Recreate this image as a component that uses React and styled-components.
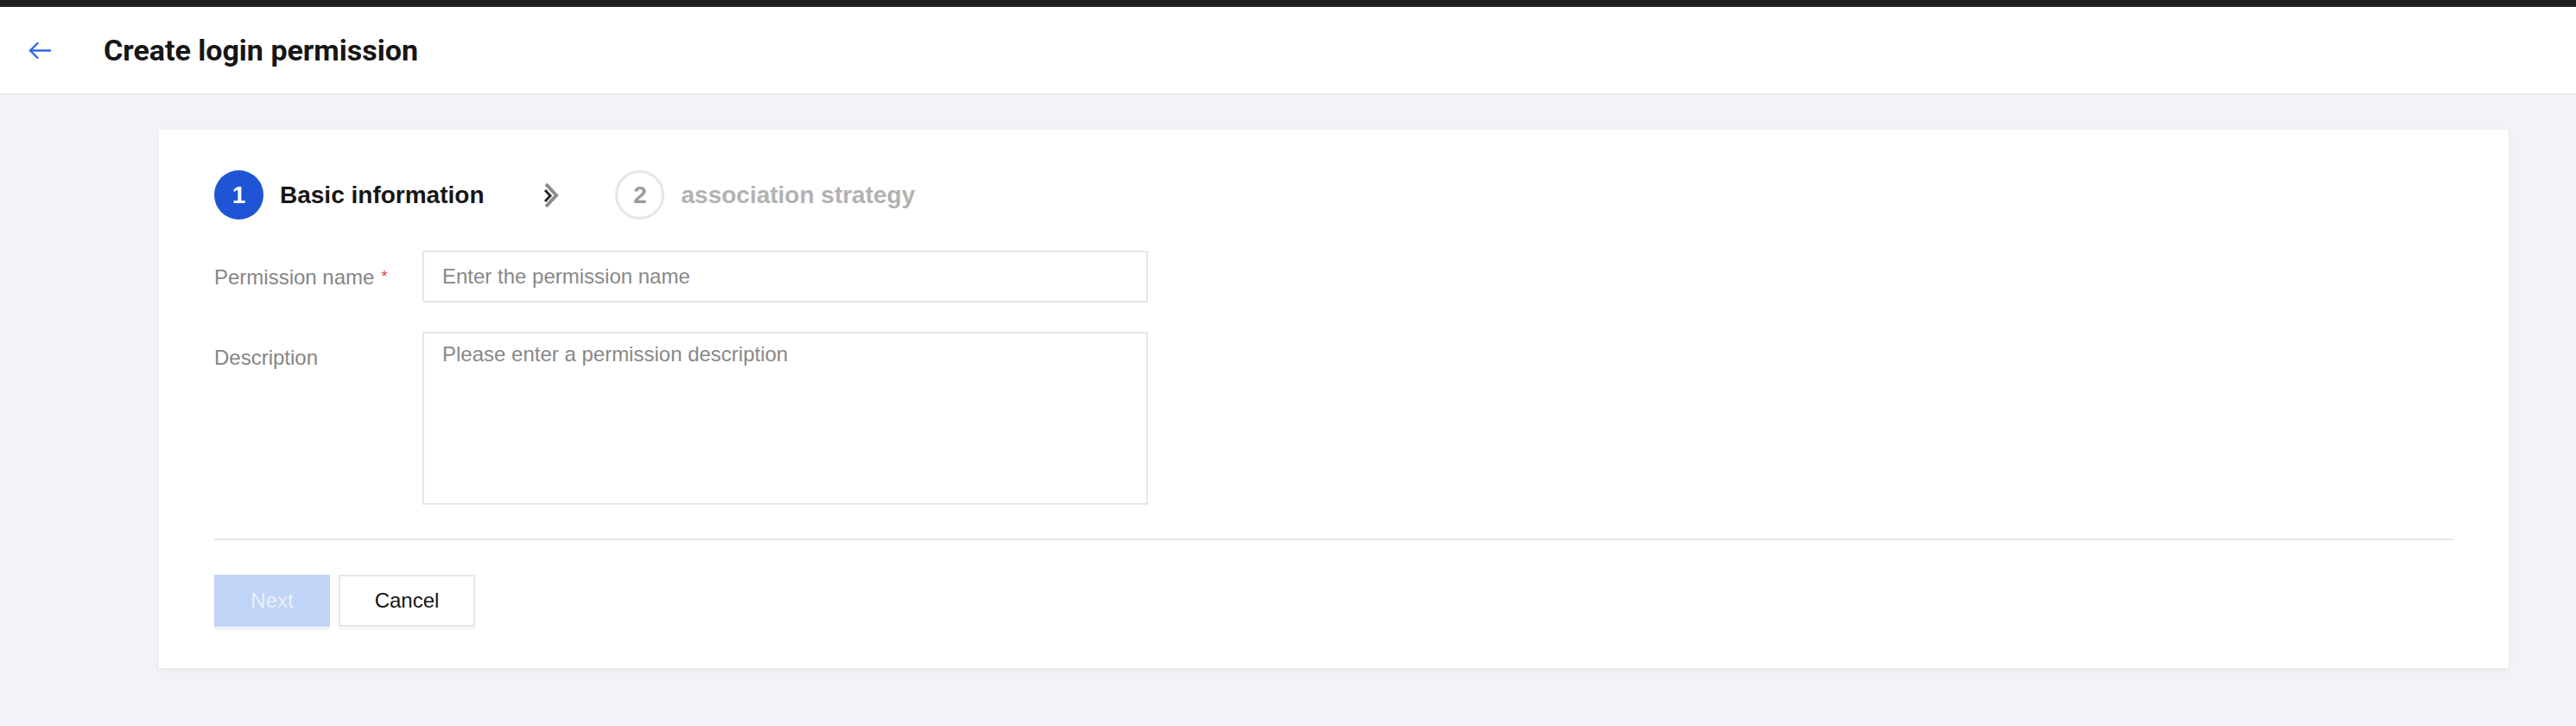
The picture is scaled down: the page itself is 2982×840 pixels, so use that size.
import React from 'react'
import styled, { createGlobalStyle } from 'styled-components'

const GlobalStyle = createGlobalStyle`
  html, body {
    margin: 0;
    padding: 0;
    background: #f2f3f7;
    font-family: "Liberation Sans", Arial, sans-serif;
  }
  * { box-sizing: border-box; }
`

const TopStrip = styled.div`
  height: 8px;
  background: #1f1f1f;
`

const Header = styled.header`
  display: flex;
  align-items: center;
  height: 102px;
  padding-left: 33px;
  background: #fff;
  border-bottom: 2px solid #e7e8ee;
`

const BackButton = styled.button`
  display: flex;
  align-items: center;
  padding: 0;
  margin-right: 60px;
  border: none;
  background: none;
  cursor: pointer;
`

const Title = styled.h1`
  margin: 0;
  font-family: Roboto, "Liberation Sans", sans-serif;
  font-size: 34px;
  font-weight: 700;
  color: #161616;
`

const Main = styled.main`
  padding: 40px 78px 40px 184px;
`

const Card = styled.section`
  background: #fff;
  padding: 47px 64px 48px 64px;
  box-shadow: 0 2px 6px rgba(0, 0, 0, 0.06);
`

const Steps = styled.div`
  display: flex;
  align-items: center;
  height: 57px;
`

const Step = styled.div`
  display: flex;
  align-items: center;
  gap: 19px;
`

const StepDot = styled.span`
  display: flex;
  align-items: center;
  justify-content: center;
  width: 57px;
  height: 57px;
  border-radius: 50%;
  font-size: 28px;
  font-weight: 700;
  background: ${p => (p.active ? '#1f55d5' : '#fff')};
  color: ${p => (p.active ? '#fff' : '#9c9c9c')};
  border: ${p => (p.active ? 'none' : '3px solid #e5e6eb')};
`

const StepLabel = styled.span`
  font-size: 28px;
  font-weight: 700;
  color: ${p => (p.active ? '#161616' : '#b2b2b2')};
`

const StepArrow = styled.span`
  display: flex;
  margin: 0 64px 0 68px;
`

const Form = styled.div`
  display: flex;
  flex-direction: column;
  gap: 33px;
  margin-top: 36px;
`

const Row = styled.div`
  display: flex;
  align-items: flex-start;
`

const Label = styled.label`
  width: 241px;
  line-height: 60px;
  font-size: 24px;
  color: #858585;
`

const Required = styled.span`
  margin-left: 8px;
  color: #e54545;
  font-size: 18px;
  vertical-align: 3px;
`

const Input = styled.input`
  width: 840px;
  height: 60px;
  padding: 0 21px;
  border: 2px solid #e5e6eb;
  font-family: inherit;
  font-size: 24px;
  color: #222;
  outline: none;
  &::placeholder { color: #888; }
`

const TextArea = styled.textarea`
  display: block;
  width: 840px;
  height: 200px;
  padding: 6px 21px;
  border: 2px solid #e5e6eb;
  font-family: inherit;
  font-size: 24px;
  line-height: 36px;
  resize: none;
  outline: none;
  &::placeholder { color: #888; }
`

const Divider = styled.hr`
  margin: 39px 0 40px;
  border: none;
  height: 2px;
  background: #e6e7ec;
`

const Actions = styled.div`
  display: flex;
  gap: 10px;
`

const Button = styled.button`
  width: ${p => p.width};
  height: 60px;
  font-family: inherit;
  font-size: 24px;
  cursor: pointer;
  background: ${p => (p.primary ? '#c0d4f7' : '#fff')};
  color: ${p => (p.primary ? '#eaf0fd' : '#141414')};
  border: ${p => (p.primary ? 'none' : '2px solid #e5e6eb')};
  box-shadow: 0 4px 0 ${p => (p.primary ? '#f0f4fd' : '#f7f7f9')};
`

const BackIcon = () => (
  <svg width="27" height="21" viewBox="0 0 27 21" fill="none" stroke="#2f6be4" strokeWidth="2.4" strokeLinecap="round" strokeLinejoin="round">
    <path d="M2 10.5H25" />
    <path d="M10.5 2L2 10.5L10.5 19" />
  </svg>
)

const ChevronIcon = () => (
  <svg width="20" height="30" viewBox="0 0 20 30" fill="none" strokeLinejoin="miter">
    <path d="M4 2L16 15L4 28" stroke="#8c8c8c" strokeWidth="4" />
    <path d="M3 9L9 15.5L3 22" stroke="#2a2a2a" strokeWidth="3" />
  </svg>
)

export default function App() {
  return (
    <>
      <GlobalStyle />
      <TopStrip />
      <Header>
        <BackButton aria-label="Back">
          <BackIcon />
        </BackButton>
        <Title>Create login permission</Title>
      </Header>
      <Main>
        <Card>
          <Steps>
            <Step>
              <StepDot active>1</StepDot>
              <StepLabel active>Basic information</StepLabel>
            </Step>
            <StepArrow>
              <ChevronIcon />
            </StepArrow>
            <Step>
              <StepDot>2</StepDot>
              <StepLabel>association strategy</StepLabel>
            </Step>
          </Steps>
          <Form>
            <Row>
              <Label htmlFor="perm-name">
                Permission name<Required>*</Required>
              </Label>
              <Input id="perm-name" placeholder="Enter the permission name" />
            </Row>
            <Row>
              <Label htmlFor="perm-desc">Description</Label>
              <TextArea id="perm-desc" placeholder="Please enter a permission description" />
            </Row>
          </Form>
          <Divider />
          <Actions>
            <Button primary width="134px">Next</Button>
            <Button width="158px">Cancel</Button>
          </Actions>
        </Card>
      </Main>
    </>
  )
}
